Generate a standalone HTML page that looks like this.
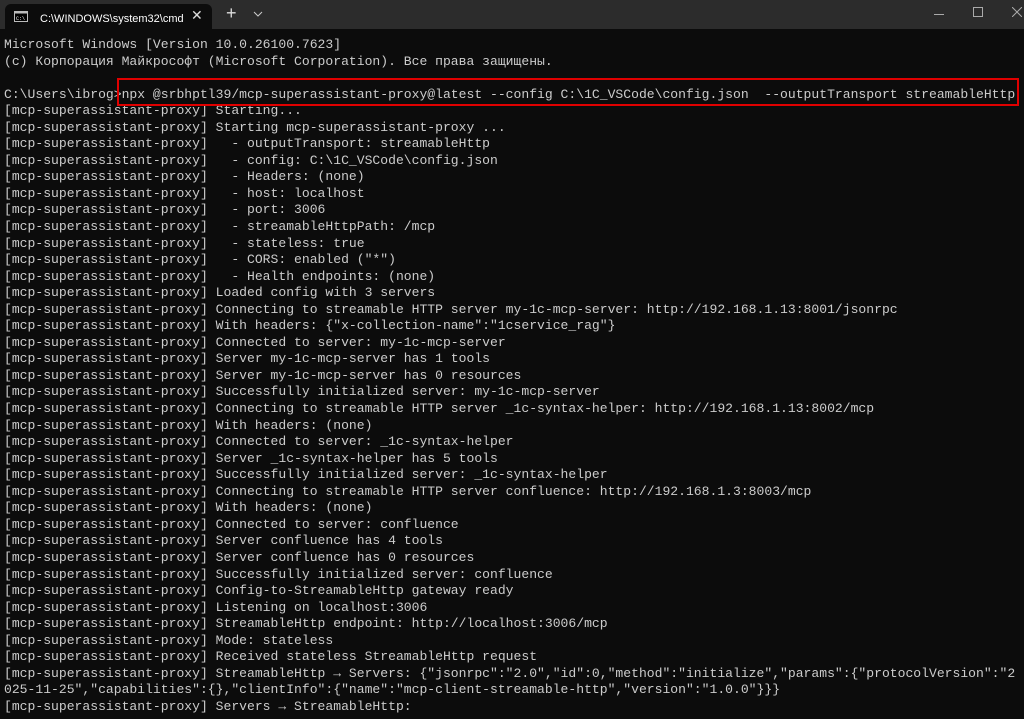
<!DOCTYPE html>
<html><head><meta charset="utf-8"><style>
body{margin:0;width:1024px;height:719px;background:#0c0c0c;overflow:hidden;position:relative;font-family:"Liberation Mono","DejaVu Sans Mono",monospace}
.bar{position:absolute;left:0;top:0;width:1024px;height:29px;background:#2c2c2c}
.tab{position:absolute;left:5px;top:4px;width:207px;height:25px;background:#0c0c0c;border-radius:6px 6px 0 0}
.tt{position:absolute;left:35px;top:9px;font:11px "Liberation Sans",sans-serif;color:#fff;white-space:nowrap;width:143px;overflow:hidden}
pre{position:absolute;left:4px;top:37px;margin:0;color:#cccccc;font-size:13.07px;line-height:16.55px;font-family:"Liberation Mono",monospace}
.box{position:absolute;left:117px;top:78px;width:898px;height:24px;border:2.5px solid #e00000}
</style></head><body>
<div class="bar">
<div class="tab">
<svg style="position:absolute;left:9px;top:7px" width="14" height="11"><rect x="0.5" y="0.5" width="13" height="10" fill="#000" stroke="#bbb"/><rect x="0.5" y="0.5" width="13" height="2" fill="#bbb"/><text x="2" y="9" font-size="5" fill="#fff" font-family="Liberation Mono">C:\</text></svg>
<div class="tt">C:\WINDOWS\system32\cmd.</div>
<div style="position:absolute;left:186px;top:3px;color:#ddd;font:14px 'Liberation Sans'">✕</div>
</div>
<div style="position:absolute;left:226px;top:3px;color:#ddd;font:18px 'Liberation Sans'">+</div>
<svg style="position:absolute;left:253px;top:11px" width="10" height="6"><path d="M1 1l4 4 4-4" stroke="#ccc" fill="none"/></svg>
<div style="position:absolute;left:934px;top:14px;width:10px;height:1px;background:#aaa"></div>
<div style="position:absolute;left:973px;top:7px;width:8px;height:8px;border:1px solid #aaa"></div>
<svg style="position:absolute;left:1012px;top:7px" width="10" height="10"><path d="M0 0l10 10M10 0L0 10" stroke="#aaa"/></svg>
</div>
<pre>Microsoft Windows [Version 10.0.26100.7623]
(c) Корпорация Майкрософт (Microsoft Corporation). Все права защищены.

C:\Users\ibrog>npx @srbhptl39/mcp-superassistant-proxy@latest --config C:\1C_VSCode\config.json  --outputTransport streamableHttp
[mcp-superassistant-proxy] Starting...
[mcp-superassistant-proxy] Starting mcp-superassistant-proxy ...
[mcp-superassistant-proxy]   - outputTransport: streamableHttp
[mcp-superassistant-proxy]   - config: C:\1C_VSCode\config.json
[mcp-superassistant-proxy]   - Headers: (none)
[mcp-superassistant-proxy]   - host: localhost
[mcp-superassistant-proxy]   - port: 3006
[mcp-superassistant-proxy]   - streamableHttpPath: /mcp
[mcp-superassistant-proxy]   - stateless: true
[mcp-superassistant-proxy]   - CORS: enabled ("*")
[mcp-superassistant-proxy]   - Health endpoints: (none)
[mcp-superassistant-proxy] Loaded config with 3 servers
[mcp-superassistant-proxy] Connecting to streamable HTTP server my-1c-mcp-server: http://192.168.1.13:8001/jsonrpc
[mcp-superassistant-proxy] With headers: {"x-collection-name":"1cservice_rag"}
[mcp-superassistant-proxy] Connected to server: my-1c-mcp-server
[mcp-superassistant-proxy] Server my-1c-mcp-server has 1 tools
[mcp-superassistant-proxy] Server my-1c-mcp-server has 0 resources
[mcp-superassistant-proxy] Successfully initialized server: my-1c-mcp-server
[mcp-superassistant-proxy] Connecting to streamable HTTP server _1c-syntax-helper: http://192.168.1.13:8002/mcp
[mcp-superassistant-proxy] With headers: (none)
[mcp-superassistant-proxy] Connected to server: _1c-syntax-helper
[mcp-superassistant-proxy] Server _1c-syntax-helper has 5 tools
[mcp-superassistant-proxy] Successfully initialized server: _1c-syntax-helper
[mcp-superassistant-proxy] Connecting to streamable HTTP server confluence: http://192.168.1.3:8003/mcp
[mcp-superassistant-proxy] With headers: (none)
[mcp-superassistant-proxy] Connected to server: confluence
[mcp-superassistant-proxy] Server confluence has 4 tools
[mcp-superassistant-proxy] Server confluence has 0 resources
[mcp-superassistant-proxy] Successfully initialized server: confluence
[mcp-superassistant-proxy] Config-to-StreamableHttp gateway ready
[mcp-superassistant-proxy] Listening on localhost:3006
[mcp-superassistant-proxy] StreamableHttp endpoint: http://localhost:3006/mcp
[mcp-superassistant-proxy] Mode: stateless
[mcp-superassistant-proxy] Received stateless StreamableHttp request
[mcp-superassistant-proxy] StreamableHttp → Servers: {"jsonrpc":"2.0","id":0,"method":"initialize","params":{"protocolVersion":"2
025-11-25","capabilities":{},"clientInfo":{"name":"mcp-client-streamable-http","version":"1.0.0"}}}
[mcp-superassistant-proxy] Servers → StreamableHttp:</pre>
<div class="box"></div>
</body></html>
